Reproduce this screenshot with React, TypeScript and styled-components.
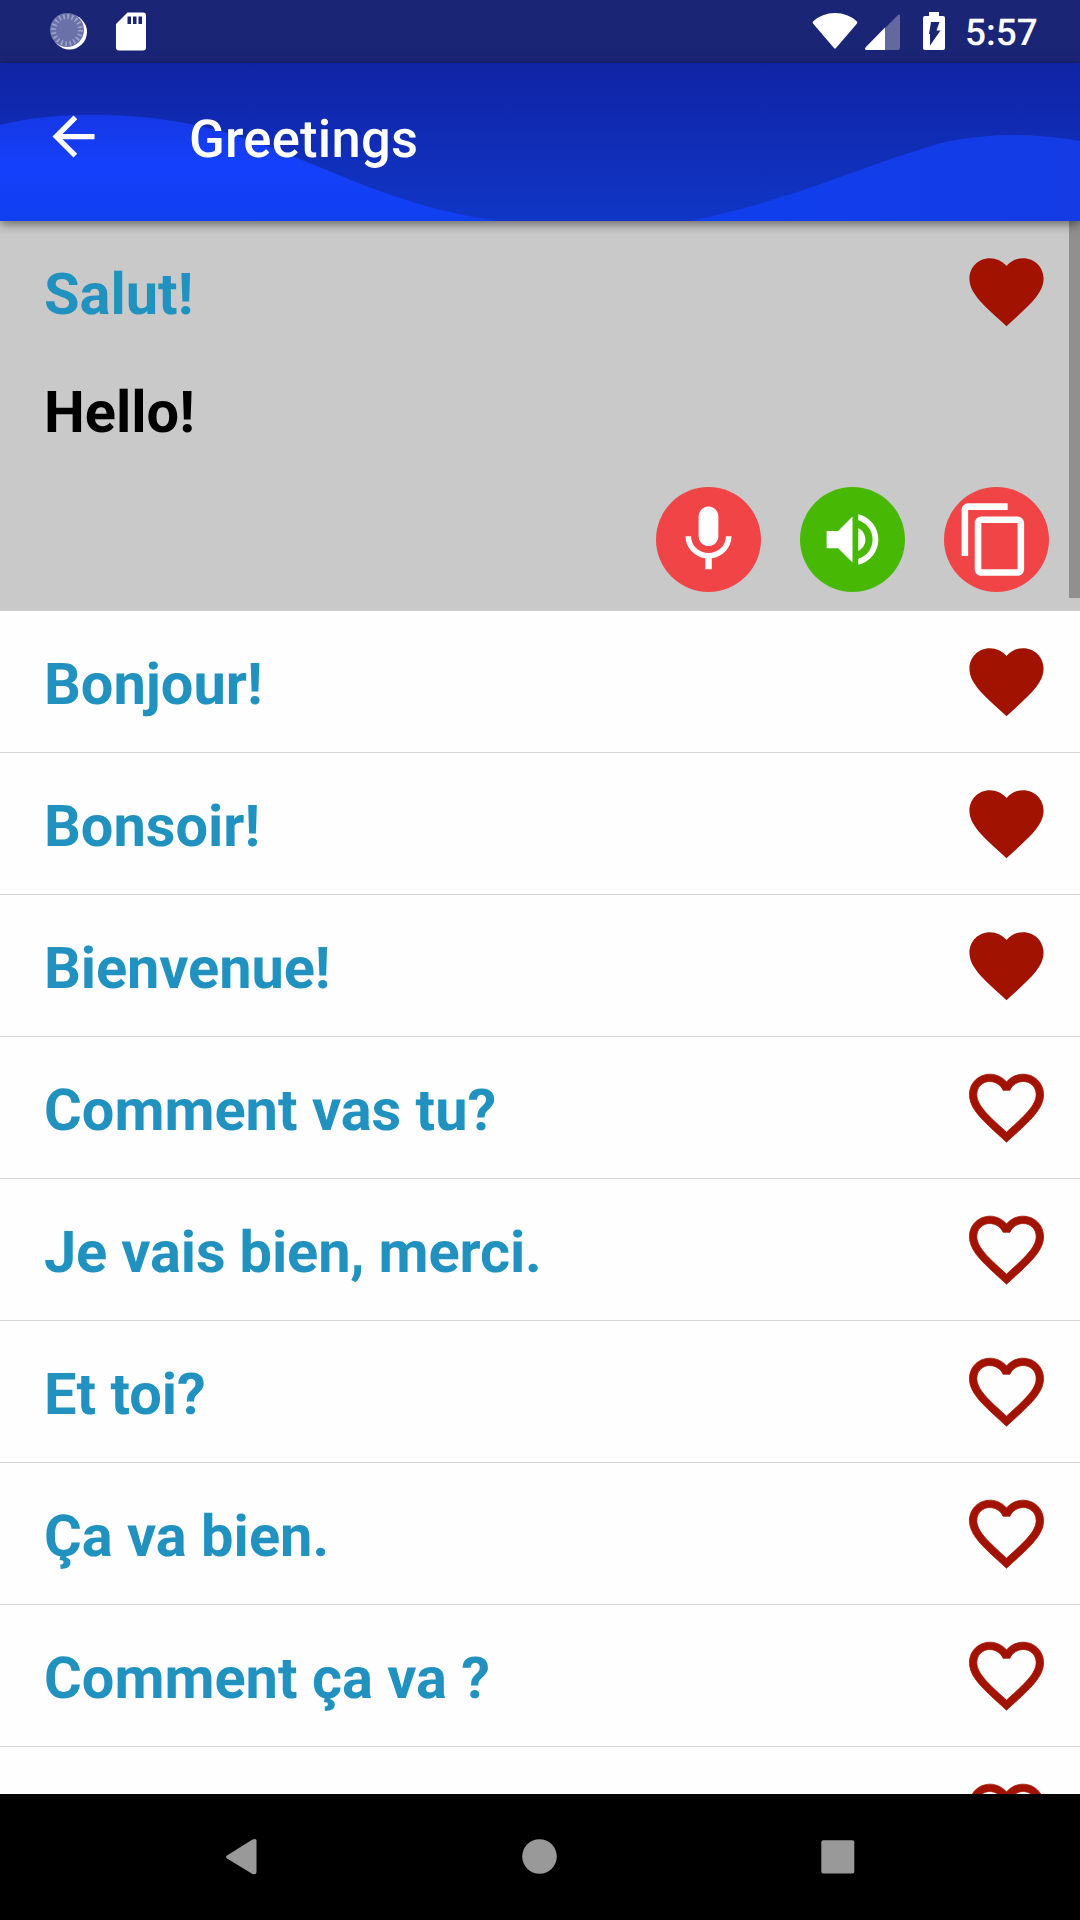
import React from "react";
import styled, { createGlobalStyle } from "styled-components";

const GlobalStyle = createGlobalStyle`
  body {
    margin: 0;
    background: #fff;
    font-family: Roboto, "Liberation Sans", sans-serif;
    text-rendering: geometricPrecision;
  }
  svg { display: block; flex: none; }
`;

const Screen = styled.div`
  width: 1080px;
  height: 1920px;
  display: flex;
  flex-direction: column;
  overflow: hidden;
  background: #fefefe;
`;

const StatusBar = styled.div`
  height: 63px;
  flex: none;
  box-sizing: border-box;
  display: flex;
  justify-content: space-between;
  background: #1b2575;
  padding: 0 42px 0 48px;
`;

const StatusGroup = styled.div`
  display: flex;
  align-items: center;
`;

const Clock = styled.span`
  width: 73px;
  color: #fff;
  font-size: 37px;
  font-weight: 500;
  line-height: 62px;
  padding-top: 5px;
  margin-left: 18px;
`;

const AppBar = styled.header`
  position: relative;
  z-index: 1;
  height: 158px;
  flex: none;
  display: flex;
  align-items: center;
  box-shadow: 0 3px 10px rgba(0, 0, 0, 0.5);
`;

const Waves = styled.svg`
  position: absolute;
  inset: 0;
`;

const BackButton = styled.button`
  position: relative;
  border: 0;
  background: none;
  padding: 0;
  margin: -12px 0 0 42px;
`;

const Title = styled.h1`
  position: relative;
  margin: -6px 0 0 84px;
  color: #fff;
  font-size: 52.5px;
  font-weight: 500;
  line-height: 62px;
  letter-spacing: 0.25px;
`;

const List = styled.main`
  position: relative;
  flex: 1;
  min-height: 0;
  overflow: hidden;
`;

const Item = styled.section<{ $open?: boolean }>`
  height: ${(p) => (p.$open ? 390 : 142)}px;
  box-sizing: border-box;
  border-bottom: 1px solid ${(p) => (p.$open ? "#d0d0d0" : "#d6d6d6")};
  background: ${(p) => (p.$open ? "#c9c9c9" : "#fefefe")};
`;

const PhraseRow = styled.div`
  height: 141px;
  display: flex;
  justify-content: space-between;
  align-items: center;
  padding: 0 29px 0 44px;
`;

const Phrase = styled.span<{ $color: string; $tracking?: number }>`
  color: ${(p) => p.$color};
  font-size: 57.75px;
  font-weight: 700;
  line-height: 68px;
  padding-top: 7px;
  letter-spacing: ${(p) => p.$tracking ?? 0}px;
`;

const Translation = styled.div`
  height: 94px;
  display: flex;
  align-items: center;
  padding-left: 44px;
`;

const Actions = styled.div`
  display: flex;
  justify-content: flex-end;
  gap: 39px;
  margin-top: 31px;
  padding-right: 31px;
`;

const RoundButton = styled.button<{ $bg: string; $shift?: number }>`
  width: 105px;
  height: 105px;
  border: 0;
  border-radius: 50%;
  display: flex;
  align-items: center;
  justify-content: center;
  padding: 0 ${(p) => p.$shift ?? 0}px 0 0;
  background: ${(p) => p.$bg};
`;

const Scrollbar = styled.div`
  position: absolute;
  top: 0;
  right: 0;
  width: 11px;
  height: 377px;
  background: #909090;
`;

const NavBar = styled.nav`
  height: 126px;
  box-sizing: border-box;
  flex: none;
  display: flex;
  align-items: flex-start;
  padding: 31px 0 0 210px;
  gap: 235px;
  background: #000;
`;

const HEART =
  "M12 21.35l-1.45-1.32C5.4 15.36 2 12.28 2 8.5 2 5.42 4.42 3 7.5 3c1.74 0 3.41.81 4.5 2.09C13.09 3.81 14.76 3 16.5 3 19.58 3 22 5.42 22 8.5c0 3.78-3.4 6.86-8.55 11.54L12 21.35z";
const HEART_OUTLINE =
  "M16.5 3c-1.74 0-3.41.81-4.5 2.09C10.91 3.81 9.24 3 7.5 3 4.42 3 2 5.42 2 8.5c0 3.78 3.4 6.86 8.55 11.54L12 21.35l1.45-1.32C18.6 15.36 22 12.28 22 8.5 22 5.42 19.58 3 16.5 3zm-4.4 15.55l-.1.1-.1-.1C7.14 14.24 4 11.39 4 8.5 4 6.5 5.5 5 7.5 5c1.54 0 3.04.99 3.57 2.36h1.87C13.46 5.99 14.96 5 16.5 5c2 0 3.5 1.5 3.5 3.5 0 2.89-3.14 5.74-7.9 10.05z";
const MIC =
  "M12 14c1.66 0 2.99-1.34 2.99-3L15 5c0-1.66-1.34-3-3-3S9 3.34 9 5v6c0 1.66 1.34 3 3 3zm5.3-3c0 3-2.54 5.1-5.3 5.1S6.7 14 6.7 11H5c0 3.41 2.72 6.23 6 6.72V21h2v-3.28c3.28-.48 6-3.3 6-6.72h-1.7z";
const VOLUME =
  "M3 9v6h4l5 5V4L7 9H3zm13.5 3c0-1.77-1.02-3.29-2.5-4.03v8.05c1.48-.73 2.5-2.25 2.5-4.02zM14 3.23v2.06c2.89.86 5 3.54 5 6.71s-2.11 5.85-5 6.71v2.06c4.01-.91 7-4.49 7-8.77s-2.99-7.86-7-8.77z";
const COPY =
  "M16 1H4c-1.1 0-2 .9-2 2v14h2V3h12V1zm3 4H8c-1.1 0-2 .9-2 2v14c0 1.1.9 2 2 2h11c1.1 0 2-.9 2-2V7c0-1.1-.9-2-2-2zm0 16H8V7h11v14z";
const BACK = "M20 11H7.83l5.59-5.59L12 4l-8 8 8 8 1.41-1.41L7.83 13H20v-2z";

type IconProps = { d: string; size: number; color?: string; weight?: number };

const Icon = ({ d, size, color = "#fff", weight = 0 }: IconProps) => (
  <svg width={size} height={size} viewBox="0 0 24 24" fill={color} stroke={color} strokeWidth={weight}>
    <path d={d} />
  </svg>
);

const phrases = [
  { text: "Salut!", liked: true, translation: "Hello!" },
  { text: "Bonjour!", liked: true },
  { text: "Bonsoir!", liked: true },
  { text: "Bienvenue!", liked: true, tracking: -0.1 },
  { text: "Comment vas tu?", liked: false },
  { text: "Je vais bien, merci.", liked: false, tracking: -0.15 },
  { text: "Et toi?", liked: false },
  { text: "Ça va bien.", liked: false },
  { text: "Comment ça va ?", liked: false },
  { text: "", liked: false },
];

export default function App() {
  return (
    <Screen>
      <GlobalStyle />
      <StatusBar>
        <StatusGroup>
          <svg width="102" height="63" viewBox="48 0 102 63">
            <circle cx="69.5" cy="32" r="17.5" fill="#fff" />
            <circle cx="67" cy="30" r="17" fill="#6a70a8" />
            <circle cx="67" cy="30" r="13.5" fill="none" stroke="#a0a4ca" strokeWidth="5" strokeDasharray="1.6 2.64" />
            <path d="M127.500 12.500h15.500a3 3 0 0 1 3 3v32a3 3 0 0 1-3 3h-24a3 3 0 0 1-3-3V24zM127.500 16.500v7.500h3.500v-7.500zM133 16.500v7.500h3.500v-7.500zM138.500 16.500v7.500h3.500v-7.500z" fill="#fff" fillRule="evenodd" />
          </svg>
        </StatusGroup>
        <StatusGroup>
          <svg width="135" height="63" viewBox="812 0 135 63">
            <path d="M813 21.500Q822 13 835 13t22 8.500q.7 1 0 2L836 48q-1 1.500-2 0L813 23.500q-.7-1 0-2z" fill="#fff" />
            <path d="M897.500 15.500q2.500-2 2.500.5v32q0 2-2 2h-31q-3.500 0-1-3z" fill="#62699f" />
            <path d="M885 27.500V50h-18q-3.500 0-1-3z" fill="#fff" />
            <path d="M929 12h10v4h4q2 0 2 2v30q0 2-2 2h-18q-2 0-2-2V18q0-2 2-2h4z" fill="#fff" />
            <path d="M931 22h8.500l-3 8.500h4L930 45.500V34h-1z" fill="#1b2575" />
          </svg>
          <Clock>5:57</Clock>
        </StatusGroup>
      </StatusBar>
      <AppBar>
        <Waves width="1080" height="158" viewBox="0 63 1080 158">
          <defs>
            <linearGradient id="sky" x1="0" y1="0" x2="0" y2="1">
              <stop offset="0" stopColor="#1023a5" />
              <stop offset="1" stopColor="#1036c6" />
            </linearGradient>
            <linearGradient id="wave" x1="0" y1="0" x2="0" y2="1">
              <stop offset="0" stopColor="#1638e6" />
              <stop offset="0.5" stopColor="#1540fb" />
              <stop offset="1" stopColor="#103ff0" />
            </linearGradient>
            <linearGradient id="waveRight" x1="0" y1="0" x2="1" y2="0">
              <stop offset="0" stopColor="#103fee" />
              <stop offset="1" stopColor="#143be4" />
            </linearGradient>
          </defs>
          <rect y="63" width="1080" height="158" fill="url(#sky)" />
          <path d="M0 125C60 110 135 113 190 124C300 146 360 200 496 221H0z" fill="url(#wave)" />
          <path d="M690 221C790 202 880 158 950 141C1000 132 1040 134 1080 141V221z" fill="url(#waveRight)" />
        </Waves>
        <BackButton aria-label="Back">
          <Icon d={BACK} size={63} />
        </BackButton>
        <Title>Greetings</Title>
      </AppBar>
      <List>
        {phrases.map((p, i) => (
          <Item key={i} $open={!!p.translation}>
            <PhraseRow>
              <Phrase $color="#2192bf" $tracking={p.tracking}>{p.text}</Phrase>
              <Icon
                d={p.liked ? HEART : HEART_OUTLINE}
                size={89}
                color="#a11300"
                weight={p.liked ? 0 : 0.2}
              />
            </PhraseRow>
            {p.translation && (
              <>
                <Translation>
                  <Phrase $color="#000">{p.translation}</Phrase>
                </Translation>
                <Actions>
                  <RoundButton $bg="#f04447" aria-label="Record">
                    <Icon d={MIC} size={79} />
                  </RoundButton>
                  <RoundButton $bg="#47b905" aria-label="Listen">
                    <Icon d={VOLUME} size={69} />
                  </RoundButton>
                  <RoundButton $bg="#f04447" $shift={5} aria-label="Copy">
                    <Icon d={COPY} size={79} />
                  </RoundButton>
                </Actions>
              </>
            )}
          </Item>
        ))}
        <Scrollbar />
      </List>
      <NavBar>
        <svg width="63" height="63" viewBox="210 1825 63 63" fill="#999">
          <path d="M252.500 1839.500q4-1.500 4 1v31.500q0 3-4 2l-25.500-15.500q-2-1.500 0-3z" />
        </svg>
        <svg width="63" height="63" viewBox="508 1825 63 63" fill="#999">
          <circle cx="539.500" cy="1856.500" r="17.300" />
        </svg>
        <svg width="63" height="63" viewBox="806 1825 63 63" fill="#999">
          <rect x="821.300" y="1840.300" width="33" height="33.300" rx="2" />
        </svg>
      </NavBar>
    </Screen>
  );
}
